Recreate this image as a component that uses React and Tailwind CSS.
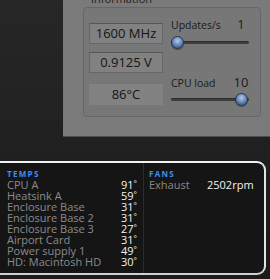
import React from "react";

const temps = [
  ["CPU A", "91"],
  ["Heatsink A", "59"],
  ["Enclosure Base", "31"],
  ["Enclosure Base 2", "31"],
  ["Enclosure Base 3", "27"],
  ["Airport Card", "31"],
  ["Power supply 1", "49"],
  ["HD: Macintosh HD", "30"],
];

function Knob({ className }) {
  return (
    <div
      className={
        "absolute top-0 h-[13px] w-[13px] rounded-full border border-[#26354d] bg-[radial-gradient(circle_at_50%_35%,#b4c8e2_0%,#6d8fbd_45%,#3d5d8c_80%,#2b4269_100%)] shadow-[0_1px_1px_rgba(0,0,0,0.4)] " +
        className
      }
    />
  );
}

function Track({ knobRight }) {
  return (
    <div className="relative h-[13px] w-full">
      <div className="absolute left-0 right-0 top-[5px] h-[3px] rounded-full bg-[#3e3e3e] border-t border-[#2e2e2e]" />
      <Knob className={knobRight ? "right-[1px]" : "left-0"} />
    </div>
  );
}

export default function App() {
  return (
    <div
      className="flex h-[279px] w-[270px] flex-col overflow-hidden bg-gradient-to-b from-[#272727] to-[#1b1b1b]"
      style={{ fontFamily: '"Open Sans", "Noto Sans", sans-serif' }}
    >
      {/* top area */}
      <div className="flex h-[137px] shrink-0">
        <div className="w-[63px] shrink-0" />
        <div className="flex flex-1 flex-col border-b border-[#4c4c4c] bg-[#7a7a7a]">
          <div className="ml-[28px] mt-[-7px] mb-[3px] text-[11px] leading-[11px] text-[#1e1e1e]">
            Information
          </div>
          <div className="ml-[20px] flex h-[110px] w-[178px] rounded-[4px] border border-[#666666] bg-[#777777]">
            <div className="ml-[5px] mt-[15px] flex w-[74px] flex-col">
              <div className="flex h-[21px] items-center justify-center border border-[#666666] border-t-[#575757] bg-[#818181] text-[13px] text-[#141414]">
                1600 MHz
              </div>
              <div className="mt-[8px] flex h-[21px] items-center justify-center border border-[#666666] border-t-[#575757] bg-[#818181] text-[13px] text-[#141414]">
                0.9125 V
              </div>
              <div className="mt-[11px] flex h-[21px] items-center justify-center bg-[#828282] text-[13px] text-[#141414]">
                86°C
              </div>
            </div>
            <div className="ml-[8px] mt-[9px] flex w-[78px] flex-col">
              <div className="flex h-[14px] items-baseline justify-between">
                <span className="text-[10.5px] leading-[14px] text-[#1a1a1a]">Updates/s</span>
                <span className="w-[16px] text-center text-[13px] leading-[14px] text-[#1a1a1a]">1</span>
              </div>
              <div className="mt-[5px]">
                <Track />
              </div>
              <div className="mt-[26px] flex h-[14px] items-baseline justify-between">
                <span className="text-[10.5px] leading-[14px] text-[#1a1a1a]">CPU load</span>
                <span className="w-[16px] text-center text-[13px] leading-[14px] text-[#1a1a1a]">10</span>
              </div>
              <div className="mt-[4px]">
                <Track knobRight />
              </div>
            </div>
          </div>
        </div>
      </div>

      {/* gap */}
      <div className="h-[24px] shrink-0" />

      {/* popup */}
      <div className="flex h-[114px] w-[266px] shrink-0 rounded-r-[9px] border-2 border-l-0 border-[#e4e4e4] border-t-[#f2f2f2] border-b-[#cfcfcf] bg-[#151515]">
        <div className="w-[143px] shrink-0 pl-[7px] pr-[6px] pt-[6px]">
          <div className="mb-[1px] text-[8px] font-bold leading-[9px] tracking-[1.3px] text-[#3d8ff0]">
            TEMPS
          </div>
          {temps.map(([name, v]) => (
            <div key={name} className="flex h-[11px] items-baseline justify-between text-[11px] leading-[11px]">
              <span className="text-[#8b8b8b]">{name}</span>
              <span className="text-[#f2f2f2]">
                {v}
                <span className="text-[8px] align-top leading-[8px]">°</span>
              </span>
            </div>
          ))}
        </div>
        <div className="flex-1 border-l border-[#2c2c2c] pl-[5px] pt-[6px]">
          <div className="mb-[1px] text-[8px] font-bold leading-[9px] tracking-[1.3px] text-[#3d8ff0]">
            FANS
          </div>
          <div className="flex h-[11px] items-baseline text-[11px] leading-[11px]">
            <span className="w-[58px] text-[#8b8b8b]">Exhaust</span>
            <span className="text-[#f2f2f2]">2502rpm</span>
          </div>
        </div>
      </div>
    </div>
  );
}
